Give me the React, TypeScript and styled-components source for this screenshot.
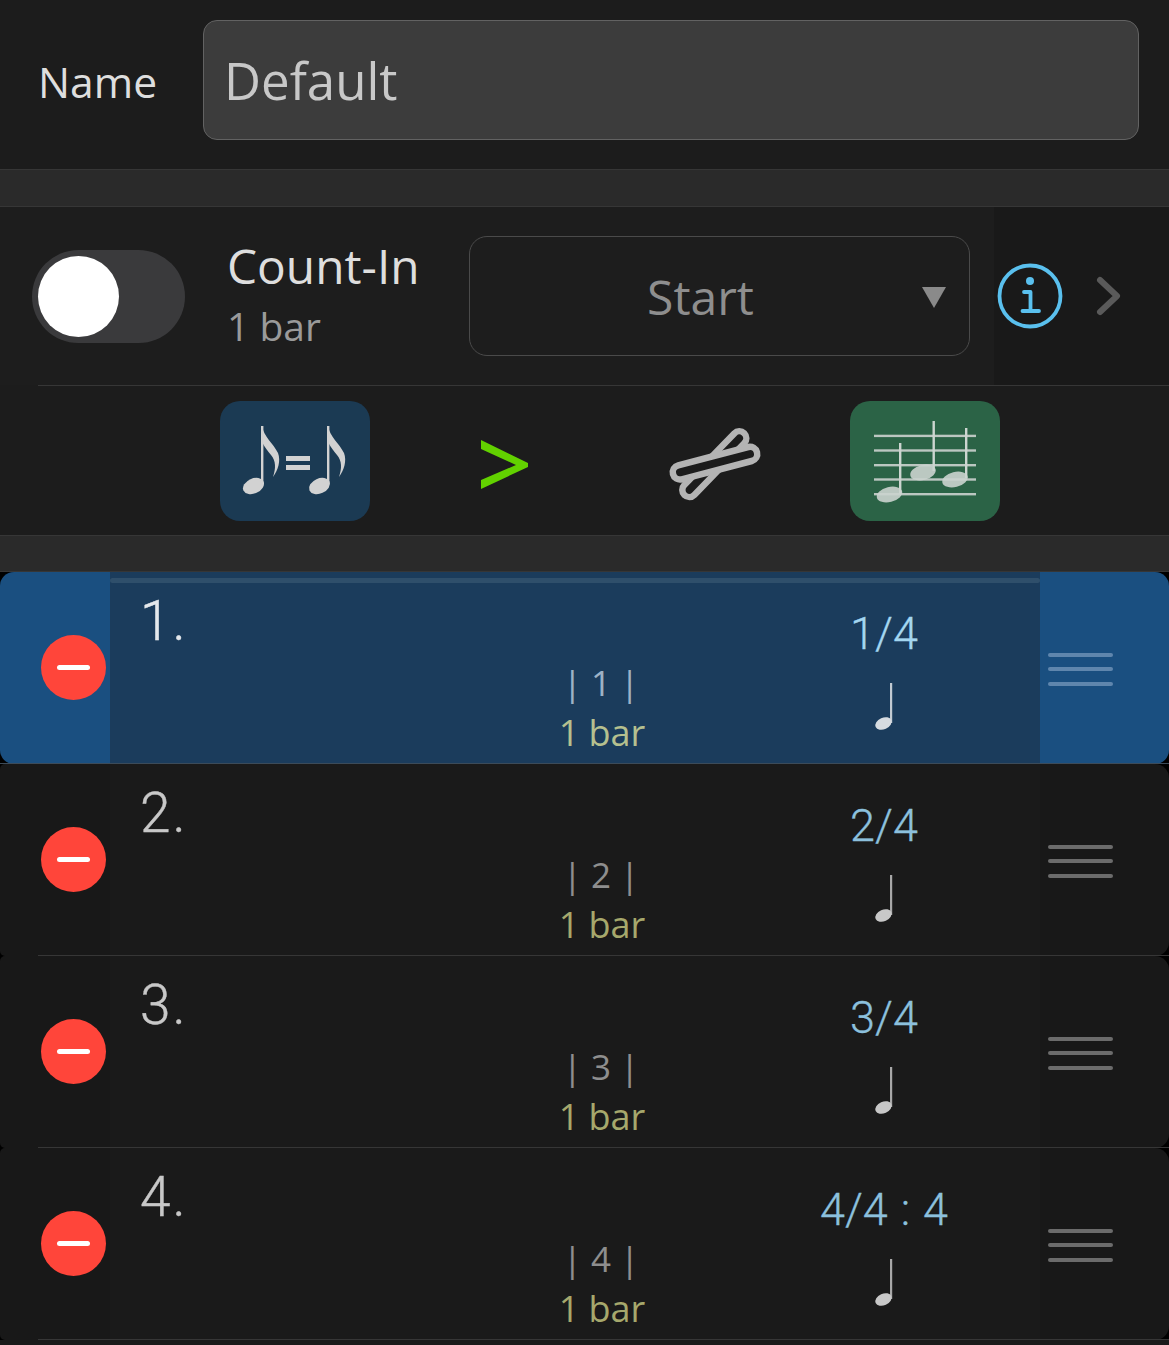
import React from 'react';
import styled, { createGlobalStyle } from 'styled-components';

const GlobalStyle = createGlobalStyle`
  html, body {
    margin: 0;
    padding: 0;
    background: #1a1a1a;
  }
  * {
    box-sizing: border-box;
  }
`;

const Page = styled.div`
  width: 1169px;
  height: 1345px;
  overflow: hidden;
  background: #000;
  font-family: 'Open Sans', 'Liberation Sans', sans-serif;
`;

const NameSection = styled.div`
  display: flex;
  align-items: flex-start;
  height: 169px;
  padding: 20px 30px 0 38px;
  background: #1c1c1c;
`;

const NameLabel = styled.div`
  width: 165px;
  padding-top: 31px;
  font-size: 42.6px;
  line-height: 60px;
  color: #dedede;
`;

const NameInput = styled.div`
  flex: 1;
  height: 120px;
  padding: 0 0 0 20px;
  display: flex;
  align-items: center;
  font-size: 51px;
  color: #c8c8c8;
  background: #3c3c3c;
  border: 1px solid #626262;
  border-radius: 14px;
`;

const Spacer = styled.div<{ $h: number }>`
  height: ${(p) => p.$h}px;
  background: #2a2a2a;
  border-top: 1px solid #363636;
  border-bottom: 1px solid #363636;
`;

const CountInRow = styled.div`
  display: flex;
  align-items: center;
  height: 178px;
  padding-left: 32px;
  background: linear-gradient(to right, #1d1d1d 994px, #191919 994px);
`;

const Toggle = styled.div`
  width: 153px;
  height: 93px;
  padding: 6px;
  border-radius: 47px;
  background: #3a3a3c;
`;

const Knob = styled.div`
  width: 81px;
  height: 81px;
  border-radius: 50%;
  background: #fff;
`;

const CountInText = styled.div`
  width: 240px;
  margin-left: 42px;
  margin-right: 2px;
`;

const CountInTitle = styled.div`
  font-size: 47.8px;
  line-height: 58px;
  margin-top: -5px;
  color: #dedede;
`;

const CountInValue = styled.div`
  font-size: 39px;
  line-height: 50px;
  margin-top: 6px;
  color: #9a9a9a;
`;

const Dropdown = styled.div`
  position: relative;
  width: 501px;
  height: 120px;
  padding-right: 38px;
  display: flex;
  align-items: center;
  justify-content: center;
  font-size: 48px;
  color: #8e8e8e;
  border: 1px solid #4a4a4a;
  border-radius: 18px;
`;

const DropdownArrow = styled.div`
  position: absolute;
  left: 452px;
  top: 50px;
  width: 0;
  height: 0;
  border-left: 12px solid transparent;
  border-right: 12px solid transparent;
  border-top: 21px solid #8a8a8a;
`;

const InfoIcon = styled.svg`
  width: 68px;
  height: 68px;
  margin-left: 26px;
`;

const ChevronIcon = styled.svg`
  width: 28px;
  height: 42px;
  margin-left: 31px;
`;

const Divider = styled.div`
  height: 1px;
  margin-left: 38px;
  background: #363636;
`;

const DividerWrap = styled.div`
  background: #1c1c1c;
`;

const ToolRow = styled.div`
  display: flex;
  gap: 60px;
  height: 149px;
  padding: 15px 0 0 220px;
  background: #1c1c1c;
`;

const ToolButton = styled.div<{ $bg?: string }>`
  width: 150px;
  height: 120px;
  border-radius: 20px;
  background: ${(p) => p.$bg ?? 'transparent'};
`;

const ToolSvg = styled.svg`
  display: block;
  width: 150px;
  height: 120px;
`;

const RowWrap = styled.div`
  position: relative;
`;

const Row = styled.div<{ $active: boolean }>`
  display: flex;
  height: 192px;
  border-radius: ${(p) => (p.$active ? '14px' : '5px 14px 14px 5px')};
  overflow: hidden;
  background: ${(p) => (p.$active ? '#1a4f80' : '#181818')};
`;

const RowSeparator = styled.div<{ $active: boolean }>`
  position: absolute;
  bottom: 0;
  left: ${(p) => (p.$active ? '0' : '38px')};
  right: 0;
  height: 1px;
  background: ${(p) => (p.$active ? '#3c4b59' : '#363636')};
`;

const LeftCell = styled.div`
  width: 110px;
  padding: 63px 0 0 41.3px;
`;

const RemoveButton = styled.div`
  width: 65px;
  height: 65px;
  border-radius: 50%;
  background: #ff453a;
  display: flex;
  align-items: center;
  justify-content: center;
`;

const RemoveBar = styled.div`
  width: 33px;
  height: 5px;
  border-radius: 3px;
  background: #fff;
`;

const Main = styled.div<{ $active: boolean }>`
  position: relative;
  display: flex;
  width: 930px;
  padding-left: 30px;
  background: ${(p) => (p.$active ? '#1b3c5c' : '#1a1a1a')};
`;

const TopStrip = styled.div`
  position: absolute;
  top: 6px;
  left: 0;
  right: 0;
  height: 5px;
  border-radius: 3px;
  background: #2f4f6b;
`;

const NumberCell = styled.div<{ $active: boolean }>`
  width: 362px;
  padding-top: 17px;
  font-family: Roboto, 'Liberation Sans', sans-serif;
  font-weight: 300;
  font-size: 55px;
  letter-spacing: 2px;
  line-height: 64px;
  color: ${(p) => (p.$active ? '#e4e8ec' : '#c8c8c8')};
  -webkit-text-stroke: 0.4px ${(p) => (p.$active ? '#e4e8ec' : '#c8c8c8')};
`;

const BarCell = styled.div`
  width: 200px;
  padding-top: 87px;
  text-align: center;
`;

const BarNumber = styled.div<{ $active: boolean }>`
  font-size: 35px;
  line-height: 48px;
  margin-left: -2px;
  color: ${(p) => (p.$active ? '#9db2c6' : '#8e8e8e')};
`;

const BarLength = styled.div<{ $active: boolean }>`
  font-size: 36px;
  line-height: 49px;
  margin-top: 1px;
  color: ${(p) => (p.$active ? '#b5c08f' : '#a6a86c')};
`;

const SigCell = styled.div`
  width: 200px;
  margin-left: 82px;
  padding-top: 33px;
  display: flex;
  flex-direction: column;
  align-items: center;
`;

const SigText = styled.div<{ $active: boolean }>`
  font-family: Roboto, 'Liberation Sans', sans-serif;
  font-weight: 300;
  font-size: 45px;
  word-spacing: 2px;
  line-height: 58px;
  white-space: nowrap;
  color: ${(p) => (p.$active ? '#a3d6f0' : '#8cc0dd')};
  -webkit-text-stroke: 0.3px ${(p) => (p.$active ? '#a3d6f0' : '#8cc0dd')};
`;

const NoteSvg = styled.svg`
  display: block;
  width: 28px;
  height: 50px;
  margin: 20px 0 0 1px;
`;

const Handle = styled.div`
  flex: 1;
  padding: 81px 0 0 8px;
  display: flex;
  flex-direction: column;
  gap: 10.3px;
`;

const HandleLine = styled.div<{ $active: boolean }>`
  width: 65px;
  height: 4px;
  border-radius: 2px;
  background: ${(p) => (p.$active ? '#5f86ad' : '#6b6b6b')};
`;

const Tail = styled.div`
  height: 6px;
  background: #1a1a1a;
`;

const EighthNote = ({ dx }: { dx: number }) => (
  <g transform={`translate(${dx} 0)`} fill="#d2d2d2">
    <ellipse cx="33.5" cy="85" rx="11" ry="7.5" transform="rotate(-24 33.5 85)" />
    <rect x="41" y="25" width="2.4" height="58" />
    <path d="M42 25 C44 36 53 42 58 52 C61 60 58 69 53 76 C56 67 56 60 51 54 C48 50 45 47 42 41 Z" />
  </g>
);

const TempoIcon = () => (
  <ToolSvg viewBox="0 0 150 120">
    <EighthNote dx={0} />
    <EighthNote dx={66} />
    <rect x="66" y="55" width="24" height="5" fill="#d2d2d2" />
    <rect x="66" y="64" width="24" height="5" fill="#d2d2d2" />
  </ToolSvg>
);

const AccentIcon = () => (
  <ToolSvg viewBox="0 0 150 120">
    <polygon points="51,39 98,62 98,66 51,88 51,79 86,64 51,48" fill="#62d100" />
  </ToolSvg>
);

const SticksIcon = () => (
  <ToolSvg viewBox="0 0 150 120">
    <path
      d="M44.3 84.1 L94.3 32.4 A7 7 0 0 1 104.3 42.2 L54.3 93.9 A7 7 0 0 1 44.3 84.1 Z"
      fill="none"
      stroke="#b4b4b4"
      strokeWidth="6.5"
    />
    <path
      d="M38.2 64.3 L108.2 46 A7.2 7.2 0 0 1 111.8 60 L41.8 78.3 A7.2 7.2 0 0 1 38.2 64.3 Z"
      fill="#1c1c1c"
      stroke="#b4b4b4"
      strokeWidth="6.5"
    />
  </ToolSvg>
);

const StaffIcon = () => (
  <ToolSvg viewBox="0 0 150 120">
    {[34.7, 49.3, 64, 78.3, 93].map((y) => (
      <rect key={y} x="24" y={y - 1} width="102" height="2.4" fill="#bcc7c1" />
    ))}
    <rect x="49" y="42" width="2.4" height="51" fill="#ccd5d0" />
    <rect x="82.5" y="20" width="2.4" height="50" fill="#ccd5d0" />
    <rect x="115" y="27" width="2.4" height="50" fill="#ccd5d0" />
    <g fill="#cbd4cf" opacity="0.9">
      <ellipse cx="39.5" cy="93.5" rx="13" ry="7.5" transform="rotate(-14 39.5 93.5)" />
      <ellipse cx="73" cy="71.5" rx="13" ry="7.5" transform="rotate(-14 73 71.5)" />
      <ellipse cx="105" cy="78.5" rx="13" ry="7.5" transform="rotate(-14 105 78.5)" />
    </g>
  </ToolSvg>
);

const QuarterNote = ({ active }: { active: boolean }) => (
  <NoteSvg viewBox="0 0 28 50">
    <rect x="19" y="0" width="2.2" height="40" fill={active ? '#c2cad2' : '#a8a8a8'} />
    <ellipse
      cx="12.5"
      cy="40.5"
      rx="8.6"
      ry="5.8"
      transform="rotate(-24 12.5 40.5)"
      fill={active ? '#d6dbe0' : '#c8c8c8'}
    />
  </NoteSvg>
);

const rows = [
  { n: 1, sig: '1/4' },
  { n: 2, sig: '2/4' },
  { n: 3, sig: '3/4' },
  { n: 4, sig: '4/4 : 4' },
];

export default function App() {
  return (
    <Page>
      <GlobalStyle />
      <NameSection>
        <NameLabel>Name</NameLabel>
        <NameInput>Default</NameInput>
      </NameSection>
      <Spacer $h={38} />
      <CountInRow>
        <Toggle>
          <Knob />
        </Toggle>
        <CountInText>
          <CountInTitle>Count-In</CountInTitle>
          <CountInValue>1 bar</CountInValue>
        </CountInText>
        <Dropdown>
          Start
          <DropdownArrow />
        </Dropdown>
        <InfoIcon viewBox="0 0 68 68">
          <circle cx="34" cy="34" r="30.5" fill="none" stroke="#5ac0ee" strokeWidth="3.8" />
          <circle cx="34" cy="19" r="4" fill="#5ac0ee" />
          <path
            d="M28 30 H34.5 V49 M26.5 49 H43"
            fill="none"
            stroke="#5ac0ee"
            strokeWidth="3.8"
            strokeLinecap="round"
            strokeLinejoin="round"
          />
        </InfoIcon>
        <ChevronIcon viewBox="0 0 28 42">
          <path
            d="M5 5 L22 21 L5 37"
            fill="none"
            stroke="#5a5a5a"
            strokeWidth="6"
            strokeLinecap="round"
            strokeLinejoin="round"
          />
        </ChevronIcon>
      </CountInRow>
      <DividerWrap>
        <Divider />
      </DividerWrap>
      <ToolRow>
        <ToolButton $bg="#1b3a53">
          <TempoIcon />
        </ToolButton>
        <ToolButton>
          <AccentIcon />
        </ToolButton>
        <ToolButton>
          <SticksIcon />
        </ToolButton>
        <ToolButton $bg="#2b6346">
          <StaffIcon />
        </ToolButton>
      </ToolRow>
      <Spacer $h={37} />
      {rows.map((row) => {
        const active = row.n === 1;
        return (
          <RowWrap key={row.n}>
            <Row $active={active}>
              <LeftCell>
                <RemoveButton>
                  <RemoveBar />
                </RemoveButton>
              </LeftCell>
              <Main $active={active}>
                {active && <TopStrip />}
                <NumberCell $active={active}>{row.n}.</NumberCell>
                <BarCell>
                  <BarNumber $active={active}>| {row.n} |</BarNumber>
                  <BarLength $active={active}>1 bar</BarLength>
                </BarCell>
                <SigCell>
                  <SigText $active={active}>{row.sig}</SigText>
                  <QuarterNote active={active} />
                </SigCell>
              </Main>
              <Handle>
                <HandleLine $active={active} />
                <HandleLine $active={active} />
                <HandleLine $active={active} />
              </Handle>
            </Row>
            <RowSeparator $active={active} />
          </RowWrap>
        );
      })}
      <Tail />
    </Page>
  );
}
